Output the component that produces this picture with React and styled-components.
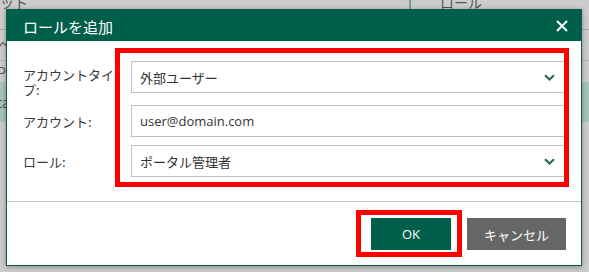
import React from "react";
import styled, { createGlobalStyle } from "styled-components";

const GlobalStyle = createGlobalStyle`
  html, body {
    margin: 0;
    padding: 0;
    width: 100%;
    height: 100%;
    overflow: hidden;
    background: #cccccc;
  }
  body {
    font-family: "Open Sans", "Noto Sans CJK JP", sans-serif;
  }
  * { box-sizing: border-box; }
`;

const Screen = styled.div`
  position: relative;
  width: 589px;
  height: 272px;
  overflow: hidden;
  background: #cccccc;
`;

/* ---------- page behind the modal ---------- */
const Page = styled.div`
  display: flex;
  flex-direction: column;
  font-family: "Noto Sans CJK JP", sans-serif;
  font-size: 14px;
  color: #555;
`;

const PageHeader = styled.div`
  height: 30px;
  border-bottom: 1px solid #a8a8a8;
  display: grid;
  grid-template-columns: 400px 40px 1fr;
  align-items: start;
  line-height: 16px;
  & > span { margin-top: -6px; }
`;

const SortArrow = styled.span`
  color: #2c6a52;
  padding-left: 3px;
`;

const PageRow = styled.div`
  height: ${(p) => p.$h}px;
  border-bottom: ${(p) => (p.$line ? "1px solid #b4b4b4" : "none")};
  background: ${(p) => (p.$selected ? "#a9c4b6" : "transparent")};
  display: flex;
  align-items: center;
  line-height: 16px;
  & > span { margin-left: -3px; }
`;

/* ---------- modal ---------- */
const Overlay = styled.div`
  position: absolute;
  inset: 0;
  padding: 9px 7px 6px 6px;
  display: flex;
  align-items: flex-start;
`;

const Dialog = styled.div`
  width: 576px;
  height: 257px;
  border: 1px solid #0c5c48;
  background: #ffffff;
  box-shadow: 0 1px 5px rgba(0, 0, 0, 0.35);
  display: flex;
  flex-direction: column;
`;

const Header = styled.div`
  height: 31px;
  background: #005f4b;
  display: flex;
  align-items: center;
  justify-content: space-between;
  padding: 0 13px 0 16px;
`;

const Title = styled.h1`
  margin: 2px 0 0 0;
  font-family: "Noto Sans CJK JP", sans-serif;
  font-size: 15px;
  font-weight: 400;
  line-height: 18px;
  color: #ffffff;
`;

const CloseButton = styled.button`
  border: 0;
  padding: 0;
  background: transparent;
  width: 12px;
  height: 12px;
  display: flex;
  align-items: center;
  justify-content: center;
  cursor: pointer;
`;

const Body = styled.div`
  padding: 20px 16px 24px 16px;
  flex: 0 0 auto;
`;

const Form = styled.div`
  display: grid;
  grid-template-columns: 96px 434px;
  grid-template-rows: 36px 32px 32px;
  column-gap: 12px;
  row-gap: 8px;
`;

const Label = styled.label`
  grid-column: 1;
  grid-row: ${(p) => p.$row};
  font-family: "Noto Sans CJK JP", sans-serif;
  font-size: 13px;
  line-height: 15px;
  color: #3a3a3a;
  align-self: ${(p) => (p.$multiline ? "start" : "center")};
  padding-top: ${(p) => (p.$multiline ? "6px" : "1px")};
`;

const FieldBox = styled.div`
  grid-column: 2;
  grid-row: ${(p) => p.$row};
  align-self: start;
  height: 32px;
  border: 1px solid #c1c1c1;
  background: #fff;
  display: flex;
  align-items: center;
  justify-content: space-between;
  padding: 0 9px 0 8px;
  font-family: "Open Sans", "Noto Sans CJK JP", sans-serif;
  font-size: 13px;
  color: #333;
`;

const TextInput = styled.input`
  grid-column: 2;
  grid-row: ${(p) => p.$row};
  align-self: start;
  height: 32px;
  width: 100%;
  border: 1px solid #c1c1c1;
  background: #fff;
  padding: 0 8px;
  margin: 0;
  outline: none;
  font-family: "Open Sans", "Noto Sans CJK JP", sans-serif;
  font-size: 13px;
  color: #333;
`;

const Highlight = styled.div`
  grid-column: ${(p) => p.$col};
  grid-row: ${(p) => p.$rows};
  margin: ${(p) => p.$margin};
  border: 5px solid #ff0000;
  pointer-events: none;
  z-index: 2;
`;

const Footer = styled.div`
  border-top: 1px solid #c6c6c6;
  padding: 16px 15px 15px 15px;
  display: flex;
  justify-content: flex-end;
  gap: 16px;
`;

const ButtonSlot = styled.div`
  display: grid;
`;

const Button = styled.button`
  grid-area: 1 / 1;
  height: 32px;
  min-width: 80px;
  padding: 0 17px;
  border: 0;
  margin: 0;
  background: ${(p) => (p.$primary ? "#005f4b" : "#666666")};
  color: #ffffff;
  font-family: "Open Sans", "Noto Sans CJK JP", sans-serif;
  font-size: 13px;
  cursor: pointer;
`;

const ButtonHighlight = styled.div`
  grid-area: 1 / 1;
  margin: -8px -11px -7px -15px;
  border: 5px solid #ff0000;
  pointer-events: none;
`;

const Chevron = () => (
  <svg width="11" height="7" viewBox="0 0 11 7" aria-hidden="true">
    <polyline
      points="1,1.2 5.5,5.5 10,1.2"
      fill="none"
      stroke="#2b6a51"
      strokeWidth="2.2"
    />
  </svg>
);

const CloseIcon = () => (
  <svg width="12" height="12" viewBox="0 0 12 12" aria-hidden="true">
    <path d="M1 1 L11 11 M11 1 L1 11" stroke="#ffffff" strokeWidth="2" />
  </svg>
);

export default function App() {
  return (
    <>
      <GlobalStyle />
      <Screen>
        <Page>
          <PageHeader>
            <span>ット</span>
            <SortArrow>↑</SortArrow>
            <span>ロール</span>
          </PageHeader>
          <PageRow $h={31} $line>
            <span>ヘ</span>
          </PageRow>
          <PageRow $h={21}>
            <span>P</span>
          </PageRow>
          <PageRow $h={40} $selected>
            <span>ta</span>
          </PageRow>
        </Page>

        <Overlay>
          <Dialog role="dialog" aria-label="ロールを追加">
            <Header>
              <Title>ロールを追加</Title>
              <CloseButton aria-label="閉じる">
                <CloseIcon />
              </CloseButton>
            </Header>
            <Body>
              <Form>
                <Label $row={1} $multiline>
                  アカウントタイプ:
                </Label>
                <FieldBox $row={1}>
                  <span>外部ユーザー</span>
                  <Chevron />
                </FieldBox>

                <Label $row={2}>アカウント:</Label>
                <TextInput $row={2} defaultValue="user@domain.com" readOnly />

                <Label $row={3}>ロール:</Label>
                <FieldBox $row={3}>
                  <span>ポータル管理者</span>
                  <Chevron />
                </FieldBox>

                <Highlight $col={2} $rows="1 / span 3" $margin="-13px -4px -10px -16px" />
              </Form>
            </Body>
            <Footer>
              <ButtonSlot>
                <Button $primary>OK</Button>
                <ButtonHighlight />
              </ButtonSlot>
              <Button>キャンセル</Button>
            </Footer>
          </Dialog>
        </Overlay>
      </Screen>
    </>
  );
}
